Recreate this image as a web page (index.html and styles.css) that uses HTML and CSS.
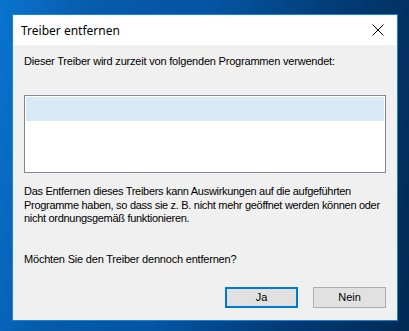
FILE: index.html
```html
<!DOCTYPE html>
<html lang="de">
<head>
    <meta charset="UTF-8">
    <title>Treiber entfernen</title>
    <link rel="stylesheet" href="styles.css">
</head>
<body>
    <div class="dialog">
        <div class="titlebar">
            <span class="title">Treiber entfernen</span>
            <span class="close">
                <svg width="12" height="12" viewBox="0 0 12 12">
                    <path d="M0.5 0.5 L11.5 11.5 M11.5 0.5 L0.5 11.5" stroke="#000" stroke-width="1" fill="none"/>
                </svg>
            </span>
        </div>

        <div class="content">
            <p class="intro">Dieser Treiber wird zurzeit von folgenden Programmen verwendet:</p>

            <!-- Liste der Programme -->
            <div class="listbox">
                <div class="list-item selected"></div>
            </div>

            <p class="warning">Das Entfernen dieses Treibers kann Auswirkungen auf die aufgeführten Programme haben, so dass sie z. B. nicht mehr geöffnet werden können oder nicht ordnungsgemäß funktionieren.</p>

            <p class="question">Möchten Sie den Treiber dennoch entfernen?</p>

            <div class="buttons">
                <button class="btn default">Ja</button>
                <button class="btn">Nein</button>
            </div>
        </div>
    </div>
</body>
</html>
```

FILE: styles.css
```css
* {
    margin: 0;
    padding: 0;
    box-sizing: border-box;
}
body {
    width: 409px;
    height: 331px;
    overflow: hidden;
    font-family: "Liberation Sans", Arial, sans-serif;
    background: linear-gradient(100deg, #0a74cf 0%, #065bab 20%, #0455a3 45%, #023a72 75%, #022a55 100%);
    padding: 14px 0 0 12px;
}
.dialog {
    width: 386px;
    height: 307px;
    border: 1px solid #1883d7;
    background-color: #f0f0f0;
    display: flex;
    flex-direction: column;
}
.titlebar {
    height: 30px;
    background-color: #ffffff;
    display: flex;
    align-items: center;
    justify-content: space-between;
    padding: 0 10px 0 8px;
}
.title {
    font-family: "Noto Sans", "Liberation Sans", sans-serif;
    font-size: 12px;
    color: #000;
}
.close {
    display: flex;
    width: 12px;
    height: 12px;
    margin-right: 3px;
}
.content {
    padding: 10px 11px 0 11px;
    font-size: 11px;
    letter-spacing: -0.2px;
    color: #000;
}
.intro {
    line-height: 13px;
}
.listbox {
    margin-top: 27px;
    height: 78px;
    border: 1px solid #828790;
    background-color: #ffffff;
    padding: 1px;
}
.list-item {
    height: 24px;
}
.list-item.selected {
    background-color: #d9eaf7;
}
.warning {
    margin-top: 12px;
    margin-right: -6px;
    letter-spacing: -0.3px;
    line-height: 13.5px;
}
.question {
    margin-top: 27px;
    line-height: 13px;
}
.buttons {
    display: flex;
    justify-content: flex-end;
    gap: 15px;
    margin-top: 21px;
}
.btn {
    width: 73px;
    height: 21px;
    font-family: "Liberation Sans", Arial, sans-serif;
    font-size: 11px;
    color: #000;
    background-color: #e1e1e1;
    border: 1px solid #adadad;
}
.btn.default {
    border: 2px solid #0078d7;
}
```
